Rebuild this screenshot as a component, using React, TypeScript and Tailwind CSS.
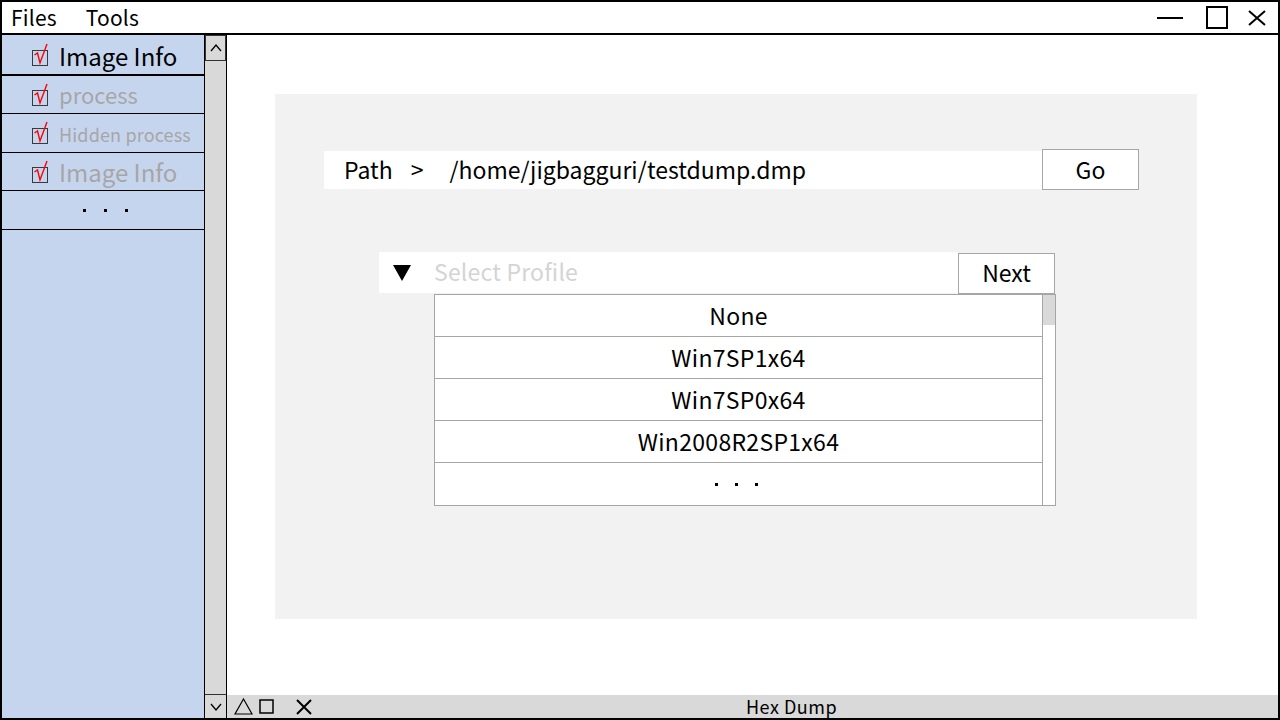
import React from "react";

const font = { fontFamily: '"Noto Sans CJK KR", "Noto Sans", sans-serif' };

function Check() {
  return (
    <span className="relative inline-block w-[16px] h-[16px] border-[1.5px] border-[#3a3a3a] shrink-0 translate-y-[3px]">
      <svg width="18" height="24" viewBox="0 0 18 24" className="absolute left-[-1px] top-[-8px] overflow-visible">
        <path d="M2.5 12 L5.5 10 L8 20 L15 1" fill="none" stroke="#ff0000" strokeWidth="1.4" strokeLinejoin="miter" />
      </svg>
    </span>
  );
}

function SideRow({ label, cls, border }: { label: string; cls: string; border: string }) {
  return (
    <div className={`flex items-center pl-[30px] gap-[11px] ${border}`}>
      <Check />
      <span className={cls}>{label}</span>
    </div>
  );
}

function Dots({ gap }: { gap: string }) {
  return (
    <span className={`flex items-center ${gap}`}>
      <span className="w-[3px] h-[3px] bg-black" />
      <span className="w-[3px] h-[3px] bg-black" />
      <span className="w-[3px] h-[3px] bg-black" />
    </span>
  );
}

export default function App() {
  const items = ["None", "Win7SP1x64", "Win7SP0x64", "Win2008R2SP1x64"];
  return (
    <div style={font} className="w-[1280px] h-[720px] border-2 border-black flex flex-col bg-white text-black overflow-hidden">
      {/* menu bar */}
      <div className="h-[33px] shrink-0 border-b-2 border-black flex items-center">
        <span className="ml-[9px] text-[21px] leading-none tracking-[0.2px]">Files</span>
        <span className="ml-[29px] text-[21px] leading-none tracking-[0.2px]">Tools</span>
        <div className="ml-auto flex items-center">
          <svg width="26" height="4" className="mr-[23px]"><line x1="0" y1="2" x2="26" y2="2" stroke="#000" strokeWidth="2" /></svg>
          <svg width="22" height="23" className="mr-[20px]"><rect x="1" y="1" width="20" height="21" fill="none" stroke="#000" strokeWidth="2" /></svg>
          <svg width="18" height="16" className="mr-[12px]"><path d="M1 1 L17 15 M17 1 L1 15" stroke="#000" strokeWidth="2" /></svg>
        </div>
      </div>
      {/* body */}
      <div className="flex flex-1 min-h-0">
        {/* sidebar */}
        <div className="w-[203px] shrink-0 bg-[#c6d5ee] border-r border-black flex flex-col">
          <div className="h-[41px]"><SideRow label="Image Info" cls="text-[24px] text-black pt-[3px]" border="h-full border-b-2 border-black" /></div>
          <div className="h-[38px]"><SideRow label="process" cls="text-[22px] text-[#a6a6a6]" border="h-full border-b border-black" /></div>
          <div className="h-[39px]"><SideRow label="Hidden process" cls="text-[18px] tracking-[0.15px] text-[#a6a6a6] pt-[3px]" border="h-full border-b border-black" /></div>
          <div className="h-[38px]"><SideRow label="Image Info" cls="text-[24px] text-[#a6a6a6]" border="h-full border-b border-black" /></div>
          <div className="h-[39px] border-b border-black flex items-center justify-center pl-[4px]">
            <Dots gap="gap-[18px]" />
          </div>
        </div>
        {/* scrollbar */}
        <div className="w-[22px] shrink-0 bg-[#d9d9d9] border-r border-black flex flex-col justify-between">
          <div className="h-[26px] border border-[#333] flex items-center justify-center">
            <svg width="12" height="8"><path d="M1 7 L6 1 L11 7" fill="none" stroke="#000" strokeWidth="1.3" /></svg>
          </div>
          <div className="h-[24px] border-t border-[#333] flex items-center justify-center">
            <svg width="12" height="8"><path d="M1 1 L6 7 L11 1" fill="none" stroke="#000" strokeWidth="1.3" /></svg>
          </div>
        </div>
        {/* main */}
        <div className="flex-1 flex flex-col min-w-0">
          <div className="flex-1 pl-[48px] pt-[59px]">
            <div className="w-[922px] h-[525px] bg-[#f2f2f2] pt-[55px] pl-[49px]">
              {/* path row */}
              <div className="flex items-center">
                <div className="w-[718px] h-[38px] bg-white flex items-center text-[23px]">
                  <span className="ml-[20px]">Path</span>
                  <span className="ml-[18px]">&gt;</span>
                  <span className="ml-[26px]">/home/jigbagguri/testdump.dmp</span>
                </div>
                <div className="w-[97px] h-[41px] bg-white border border-[#a6a6a6] flex items-center justify-center text-[23px]">Go</div>
              </div>
              {/* select */}
              <div className="ml-[55px] mt-[62px]">
                <div className="flex items-start">
                  <div className="w-[579px] h-[41px] bg-white flex items-center">
                    <svg width="18" height="16" className="ml-[14px]"><polygon points="0,0 18,0 9,16" fill="#000" /></svg>
                    <span className="ml-[23px] text-[23px] tracking-[0.2px] text-[#d4d4d4] pb-[2px]">Select Profile</span>
                  </div>
                  <div className="w-[97px] h-[41px] mt-[1px] bg-white border border-[#a6a6a6] flex items-center justify-center text-[23px] pb-[2px]">Next</div>
                </div>
                <div className="ml-[55px] flex">
                  <div className="w-[609px] border border-[#a6a6a6] bg-white">
                    {items.map((t, i) => (
                      <div key={i} className="h-[42px] flex items-center justify-center text-[23px] tracking-[0.3px] border-b border-[#a6a6a6]">
                        {t}
                      </div>
                    ))}
                    <div className="h-[42px] flex items-center justify-center pr-[4px]">
                      <Dots gap="gap-[17px]" />
                    </div>
                  </div>
                  <div className="w-[13px] border-t border-r border-b border-[#a6a6a6] bg-white">
                    <div className="h-[30px] bg-[#d9d9d9]" />
                  </div>
                </div>
              </div>
            </div>
          </div>
          {/* status bar */}
          <div className="h-[23px] shrink-0 bg-[#d9d9d9] flex items-center relative">
            <svg width="19" height="17" className="ml-[7px]"><polygon points="9.5,1 18,16 1,16" fill="none" stroke="#000" strokeWidth="1.2" /></svg>
            <svg width="15" height="15" className="ml-[6px]"><rect x="1" y="1" width="13" height="13" fill="none" stroke="#000" strokeWidth="1.5" /></svg>
            <svg width="16" height="16" className="ml-[22px]"><path d="M1 1 L15 15 M15 1 L1 15" stroke="#000" strokeWidth="2" /></svg>
            <span className="absolute left-[519px] top-0 text-[18px] tracking-[0.5px] leading-[23px]">Hex Dump</span>
          </div>
        </div>
      </div>
    </div>
  );
}
